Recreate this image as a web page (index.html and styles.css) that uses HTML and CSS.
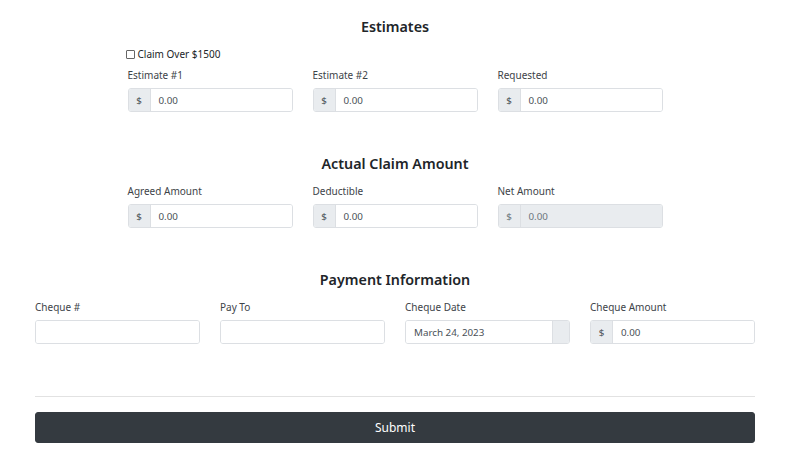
FILE: index.html
```html
<!DOCTYPE html>
<html>
<head>
<meta charset="utf-8">
<link rel="stylesheet" href="styles.css">
</head>
<body>
<div class="container">
  <section class="section section-first">
    <h2 class="title">Estimates</h2>
    <div class="narrow">
      <label class="check"><input type="checkbox" class="box"> Claim Over $1500</label>
      <div class="row after-check">
        <div class="field">
          <div class="label">Estimate #1</div>
          <div class="group"><span class="addon">$</span><span class="control">0.00</span></div>
        </div>
        <div class="field">
          <div class="label">Estimate #2</div>
          <div class="group"><span class="addon">$</span><span class="control">0.00</span></div>
        </div>
        <div class="field">
          <div class="label">Requested</div>
          <div class="group"><span class="addon">$</span><span class="control">0.00</span></div>
        </div>
      </div>
    </div>
  </section>

  <section class="section">
    <h2 class="title">Actual Claim Amount</h2>
    <div class="narrow">
      <div class="row">
        <div class="field">
          <div class="label">Agreed Amount</div>
          <div class="group"><span class="addon">$</span><span class="control">0.00</span></div>
        </div>
        <div class="field">
          <div class="label">Deductible</div>
          <div class="group"><span class="addon">$</span><span class="control">0.00</span></div>
        </div>
        <div class="field">
          <div class="label">Net Amount</div>
          <div class="group disabled"><span class="addon">$</span><span class="control">0.00</span></div>
        </div>
      </div>
    </div>
  </section>

  <section class="section">
    <h2 class="title">Payment Information</h2>
    <div class="row wide">
      <div class="field">
        <div class="label">Cheque #</div>
        <div class="group"><span class="control"></span></div>
      </div>
      <div class="field">
        <div class="label">Pay To</div>
        <div class="group"><span class="control"></span></div>
      </div>
      <div class="field">
        <div class="label">Cheque Date</div>
        <div class="group"><span class="control date">March 24, 2023</span><span class="addon addon-end"></span></div>
      </div>
      <div class="field">
        <div class="label">Cheque Amount</div>
        <div class="group"><span class="addon">$</span><span class="control">0.00</span></div>
      </div>
    </div>
  </section>

  <hr class="divider">
  <button class="submit">Submit</button>
</div>
</body>
</html>
```

FILE: styles.css
```css
* { box-sizing: border-box; }
body {
  margin: 0;
  font-family: "Noto Sans", "Open Sans", sans-serif;
  color: #212529;
  background: #fff;
}
.container {
  width: 720px;
  margin: 0 auto;
}
.section {
  display: flex;
  flex-direction: column;
  align-items: center;
  padding-top: 42px;
}
.section-first { padding-top: 17px; }
.title {
  margin: 0;
  font-size: 14.3px;
  line-height: 20px;
  font-weight: 600;
  color: #212529;
}
.narrow {
  width: 535px;
  margin-top: 9px;
}
.check {
  display: flex;
  align-items: center;
  gap: 3px;
  height: 16px;
  font-size: 10px;
  color: #212529;
  margin-left: -2px;
}
.box {
  appearance: none;
  -webkit-appearance: none;
  width: 9px;
  height: 9px;
  margin: 0;
  border: 1px solid #666;
  border-radius: 1px;
  background: #fff;
}
.row {
  display: flex;
  gap: 20px;
}
.after-check { margin-top: 5px; }
.wide { width: 720px; margin-top: 9px; }
.field { width: 165px; }
.label {
  font-size: 10px;
  line-height: 16px;
  height: 16px;
  color: #3d4348;
}
.group {
  display: flex;
  height: 24px;
  margin-top: 5px;
  border: 1px solid #dcdfe3;
  border-radius: 3px;
  overflow: hidden;
  font-size: 9.8px;
  color: #495057;
}
.addon {
  width: 22px;
  flex: none;
  display: flex;
  align-items: center;
  justify-content: center;
  background: #e9ecef;
  border-right: 1px solid #dcdfe3;
  color: #495057;
}
.addon-end {
  width: 17px;
  border-right: none;
  border-left: 1px solid #dcdfe3;
}
.control {
  flex: 1;
  display: flex;
  align-items: center;
  padding-left: 8px;
  background: #fff;
}
.disabled .control { background: #e9ecef; }
.disabled .addon { color: #6c757d; }
.disabled .control { color: #6c757d; }
.divider {
  margin: 52px 0 0;
  border: 0;
  border-top: 1px solid #e2e2e2;
  height: 0;
}
.submit {
  display: block;
  width: 100%;
  height: 31px;
  margin-top: 15px;
  border: 1px solid #343a40;
  border-radius: 3px;
  background: #343a40;
  color: #fff;
  font-family: "Noto Sans", "Open Sans", sans-serif;
  font-size: 12px;
}
```
